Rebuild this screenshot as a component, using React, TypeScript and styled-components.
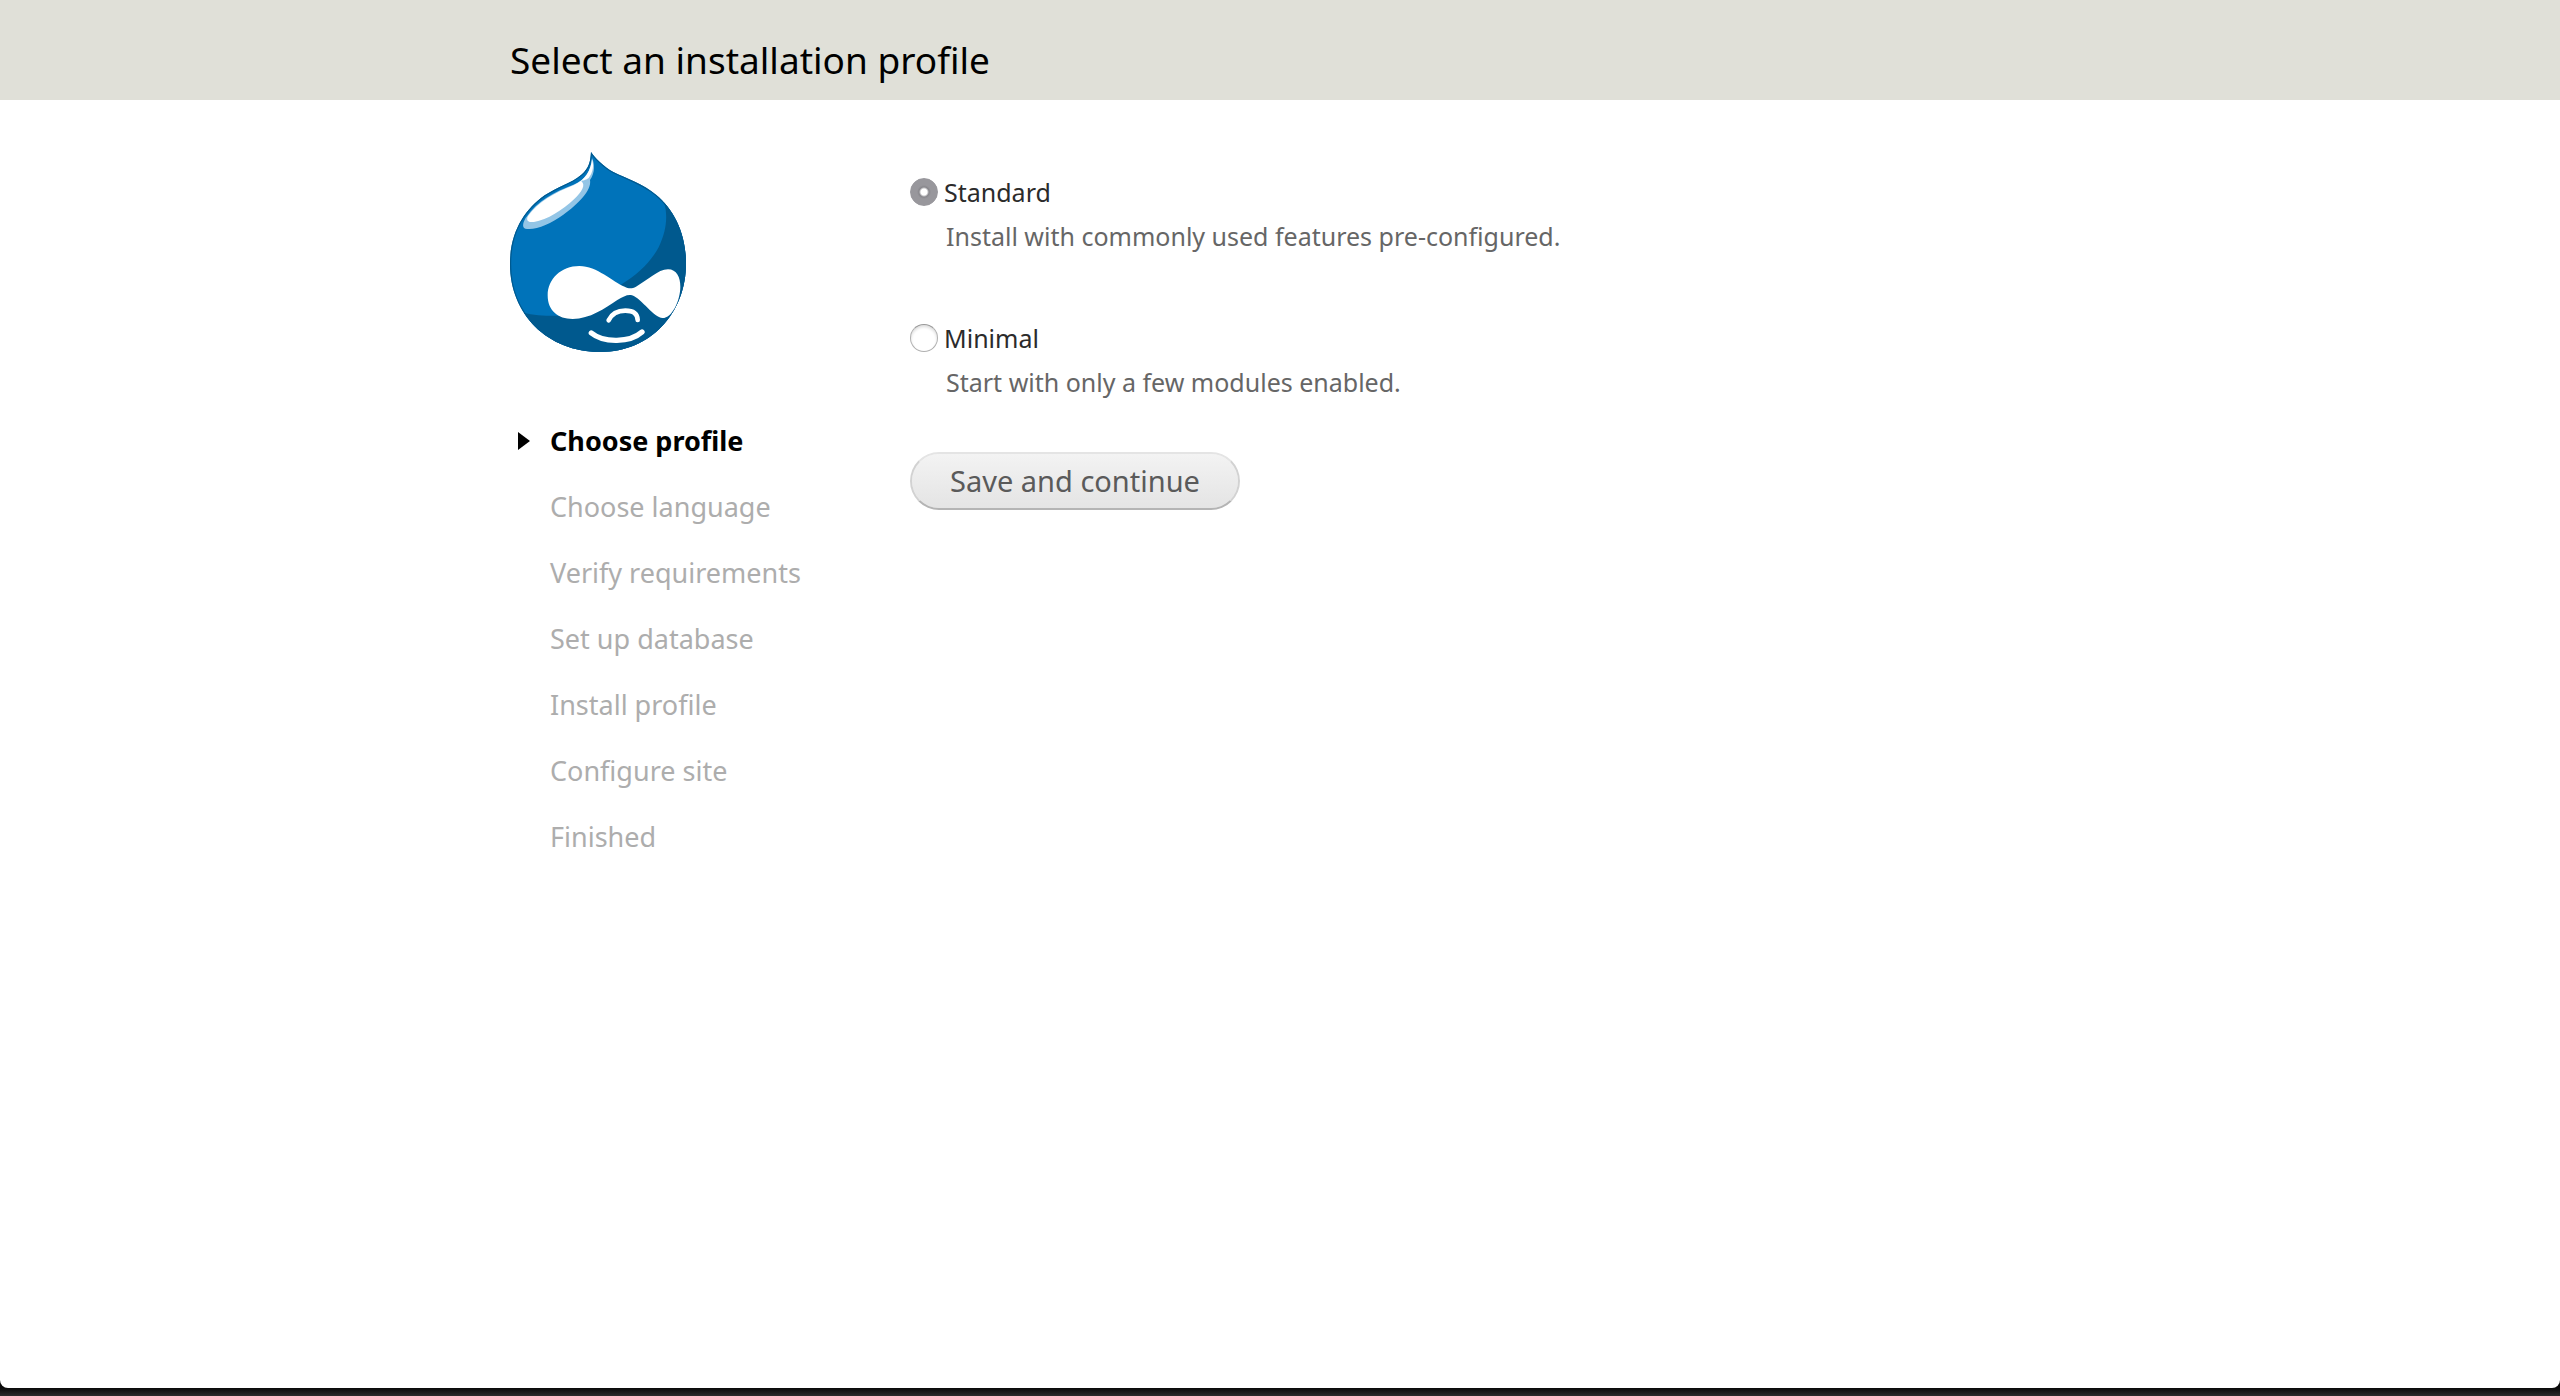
import React, { useState } from "react";
import styled, { createGlobalStyle } from "styled-components";

const GlobalStyle = createGlobalStyle`
  * { box-sizing: border-box; }
  body {
    margin: 0;
    background: #1c1d1d;
    font-family: "Noto Sans", "Open Sans", sans-serif;
    color: #000;
  }
`;

const Desktop = styled.div`
  min-height: 100vh;
  display: flex;
  flex-direction: column;
  padding-bottom: 8px;
  background: linear-gradient(to top, #2c2d2d, #0a0a0a 8px);
`;

const Page = styled.div`
  flex: 1;
  background: #fff;
  border-radius: 0 0 8px 8px;
`;

const Header = styled.header`
  background: #e0e0d8;
`;

const Container = styled.div`
  width: 100%;
  max-width: 1540px;
  margin: 0 auto;
`;

const Title = styled.h1`
  margin: 0;
  padding: 36px 0 16px;
  font-size: 37px;
  line-height: 48px;
  font-weight: 400;
`;

const Columns = styled(Container)`
  display: grid;
  grid-template-columns: 360px 1fr;
  column-gap: 40px;
  padding-top: 52px;
`;

const Logo = styled.svg`
  display: block;
  width: 176px;
  height: 200px;
`;

const TaskList = styled.ol`
  list-style: none;
  margin: 56px 0 0;
  padding: 0;
`;

const Task = styled.li<{ $active?: boolean }>`
  display: grid;
  grid-template-columns: 12px 1fr;
  column-gap: 20px;
  align-items: center;
  padding: 0 0 0 8px;
  height: 66px;
  font-size: 27px;
  line-height: 36px;
  font-weight: ${(p) => (p.$active ? 700 : 400)};
  color: ${(p) => (p.$active ? "#000" : "#adadad")};
`;

const Marker = styled.svg`
  width: 12px;
  height: 18px;
`;

const Form = styled.form`
  display: flex;
  flex-direction: column;
  align-items: flex-start;
  padding-top: 22px;
`;

const Option = styled.div`
  display: grid;
  grid-template-columns: 28px 1fr;
  column-gap: 6px;
  row-gap: 8px;
  align-items: center;
  margin-bottom: 66px;

  &:last-of-type {
    margin-bottom: 52px;
  }
`;

const Radio = styled.input`
  appearance: none;
  width: 28px;
  height: 28px;
  margin: 0;
  border-radius: 50%;
  border: 1px solid #b0b0b0;
  border-top-color: #989898;
  background: #fff;
  box-shadow: inset 0 2px 3px #dedede;

  &:checked {
    border-color: #98979c;
    background: radial-gradient(circle, #fff 3px, #88878c 5px, #98979c 7px);
    box-shadow: none;
  }
`;

const OptionLabel = styled.label`
  font-size: 25px;
  line-height: 36px;
  color: #2b2b2b;
`;

const Description = styled.p`
  grid-column: 2;
  margin: 0;
  padding-left: 2px;
  font-size: 25px;
  line-height: 36px;
  color: #666;
`;

const SubmitButton = styled.button`
  height: 58px;
  padding: 0 38px;
  border: 2px solid #e4e4e4;
  border-left-color: #d2d2d2;
  border-right-color: #d2d2d2;
  border-bottom-color: #b4b4b4;
  border-radius: 29px;
  background: linear-gradient(#f3f3f3, #e4e4e4) padding-box;
  color: #5a5a5a;
  font-family: inherit;
  font-size: 29px;
  line-height: 36px;
`;

const tasks = [
  "Choose profile",
  "Choose language",
  "Verify requirements",
  "Set up database",
  "Install profile",
  "Configure site",
  "Finished",
];

const profiles = [
  { id: "standard", name: "Standard", text: "Install with commonly used features pre-configured." },
  { id: "minimal", name: "Minimal", text: "Start with only a few modules enabled." },
];

const DROP =
  "M243 0C252 14 282 46 310 60C350 80 400 96 438 128C496 176 528 250 528 334C528 486 420 600 272 600C112 600 0 486 0 336C0 240 44 172 104 130C142 104 184 94 214 68C238 48 241 28 243 0Z";

function DrupalLogo() {
  return (
    <Logo viewBox="0 0 528 600" role="img" aria-label="Drupal">
      <defs>
        <clipPath id="drop"><path d={DROP} /></clipPath>
      </defs>
      <path d={DROP} fill="#0073ba" />
      <g clipPath="url(#drop)">
        <path d="M462 150C474 190 470 236 446 286C422 330 384 366 336 396L200 486C160 494 90 494 40 482L60 620H540V150Z" fill="#00598e" />
        <path d={DROP} fill="none" stroke="#00598e" strokeWidth="7" />
      </g>
      <path d="M246 18C254 34 256 62 240 84C246 116 202 158 160 188C120 216 76 236 46 230C34 226 40 206 50 194C80 150 130 120 190 98C226 84 244 56 246 18Z" fill="#93c5e6" />
      <path d="M246 22C252 38 250 62 236 78C226 86 218 84 214 88C228 98 216 120 192 142C158 174 112 204 72 210C52 212 48 204 54 192C84 150 134 122 192 99C226 84 242 56 246 22Z" fill="#fff" />
      <path d="M208 342C262 342 308 390 344 404C356 410 366 410 378 404C412 386 444 352 474 352C500 352 511 376 511 404C511 446 486 498 458 498C430 498 396 440 366 430C352 427 340 434 322 444C284 470 240 500 188 501C144 501 113 476 113 430C113 380 154 342 208 342Z" fill="#fff" />
      <path d="M296 505C304 488 322 476 346 476C370 476 382 484 383 504" fill="none" stroke="#fff" strokeWidth="14" strokeLinecap="round" />
      <path d="M244 543C282 574 360 572 396 540" fill="none" stroke="#fff" strokeWidth="16" strokeLinecap="round" />
    </Logo>
  );
}

export default function App() {
  const [selected, setSelected] = useState("standard");
  return (
    <Desktop>
      <GlobalStyle />
      <Page>
        <Header>
          <Container>
            <Title>Select an installation profile</Title>
          </Container>
        </Header>
        <Columns>
          <aside>
            <DrupalLogo />
            <TaskList>
              {tasks.map((task, i) => (
                <Task key={task} $active={i === 0} aria-current={i === 0 ? "step" : undefined}>
                  <Marker viewBox="0 0 12 18" aria-hidden="true">
                    {i === 0 && <path d="M0 0L12 9L0 18Z" fill="#000" />}
                  </Marker>
                  <span>{task}</span>
                </Task>
              ))}
            </TaskList>
          </aside>
          <main>
            <Form onSubmit={(e) => e.preventDefault()}>
              {profiles.map((p) => (
                <Option key={p.id}>
                  <Radio
                    type="radio"
                    name="profile"
                    id={p.id}
                    checked={selected === p.id}
                    onChange={() => setSelected(p.id)}
                    aria-describedby={`${p.id}-text`}
                  />
                  <OptionLabel htmlFor={p.id}>{p.name}</OptionLabel>
                  <Description id={`${p.id}-text`}>{p.text}</Description>
                </Option>
              ))}
              <SubmitButton type="submit">Save and continue</SubmitButton>
            </Form>
          </main>
        </Columns>
      </Page>
    </Desktop>
  );
}
